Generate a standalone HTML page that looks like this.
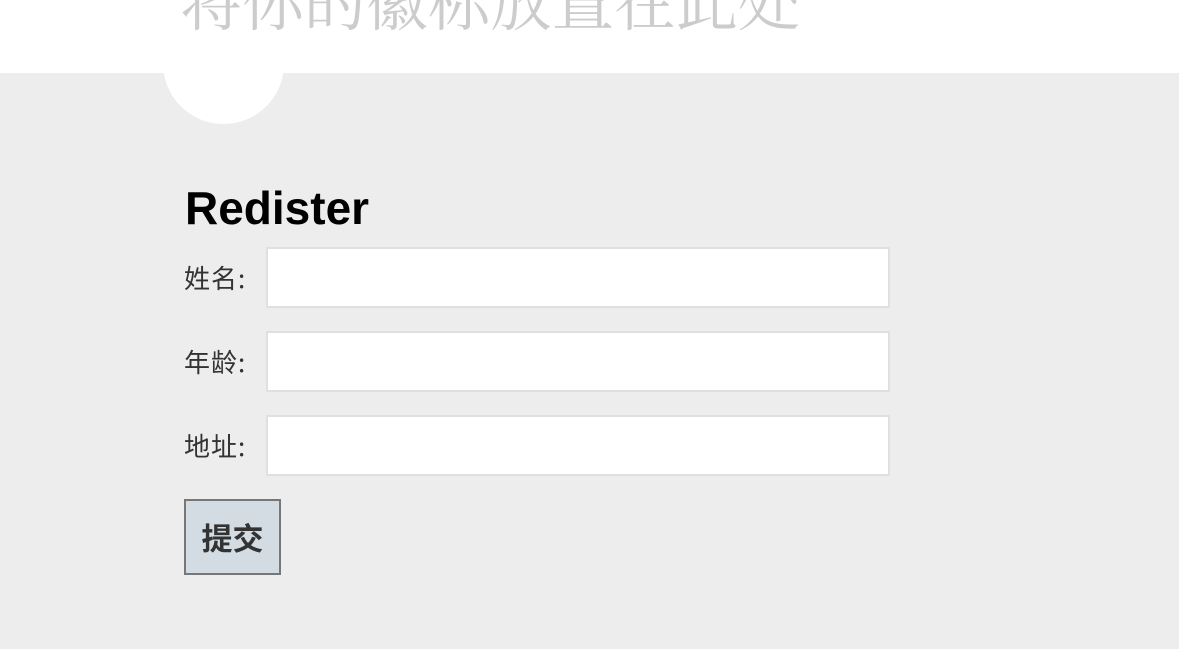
<!DOCTYPE html>
<html><head><meta charset="utf-8"><style>
body{margin:0;width:1179px;height:649px;background:#ededed;position:relative;overflow:hidden;font-family:"Liberation Sans","Noto Sans CJK SC",sans-serif}
.hdr{position:absolute;left:0;top:0;width:1179px;height:73px;background:#fff}
.circ{position:absolute;left:163px;top:3px;width:121px;height:121px;border-radius:50%;background:#fff}
.logo{position:absolute;left:180px;top:-33px;font-family:"Liberation Serif","Noto Serif CJK SC",serif;font-size:62px;color:#cccccc;white-space:nowrap;line-height:76px}
h1{position:absolute;left:185px;top:178px;margin:0;font-size:46px;font-weight:bold;color:#000;line-height:60px}
.lab{position:absolute;left:184px;font-family:"Noto Sans CJK SC",sans-serif;font-size:26px;color:#333;line-height:30px;letter-spacing:1px}
.in{position:absolute;left:266px;width:620px;height:57px;background:#fff;border:2px solid #e0e0e0}
.btn{position:absolute;left:184px;top:499px;width:93px;height:72px;border:2px solid #777;background:#d3dce3;font-family:"Noto Sans CJK SC",sans-serif;font-size:31px;font-weight:bold;color:#333;text-align:center;line-height:72px}
</style></head><body>
<div class="circ"></div>
<div class="hdr"></div>
<div class="logo">将你的徽标放置在此处</div>
<h1>Redister</h1>
<div class="lab" style="top:263px">姓名:</div><div class="in" style="top:247px"></div>
<div class="lab" style="top:347px">年龄:</div><div class="in" style="top:331px"></div>
<div class="lab" style="top:431px">地址:</div><div class="in" style="top:415px"></div>
<div class="btn">提交</div>
</body></html>
